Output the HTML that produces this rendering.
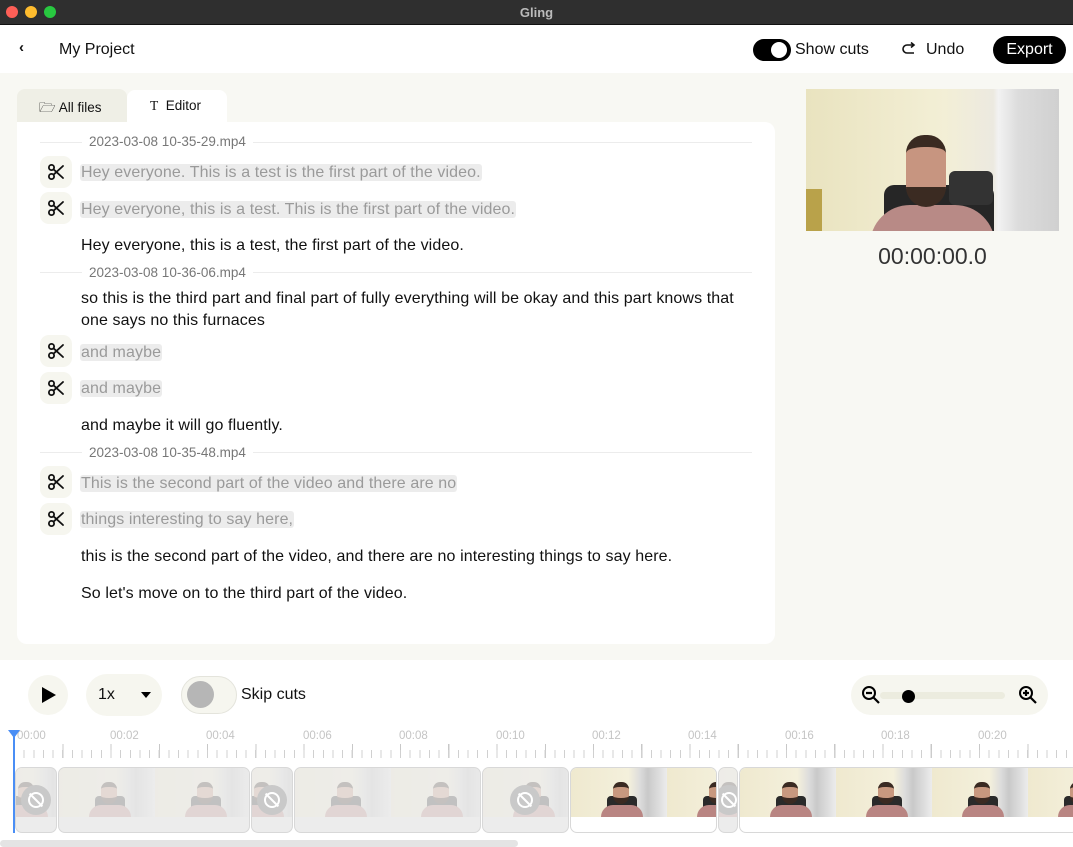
<!DOCTYPE html>
<html><head><meta charset="utf-8"><style>
*{margin:0;padding:0;box-sizing:border-box}
body{width:1073px;height:847px;overflow:hidden;font-family:"Liberation Sans",sans-serif;background:#f8f8f3;position:relative;color:#111}
.a{position:absolute}
.tb{left:0;top:0;width:1073px;height:25px;background:#2f2f2f;border-bottom:1px solid #111}
.dot{top:6px;width:12px;height:12px;border-radius:50%}
.hdr{left:0;top:25px;width:1073px;height:48px;background:#fff}
.panel{left:17px;top:122px;width:758px;height:522px;background:#fff;border-radius:0 10px 10px 10px}
.sep{height:1px;background:#ececec}
.fn{font-size:13.5px;color:#777;background:#fff;padding:0 7px}
.ln{left:81px;font-size:16px;letter-spacing:0.1px;line-height:22px;color:#111}
.cut{color:#9a9a9a;background:#ececec;border-radius:3px;padding:0 1px;margin-left:-1px}
.sc{left:40px;width:32px;height:32px;border-radius:9px;background:#f6f6ef}
.sc svg{position:absolute;left:7px;top:7px}
.bot{left:0;top:660px;width:1073px;height:187px;background:#fff}
.lab{top:730px;font-size:11.5px;color:#c4c4c4}
.clip{top:767px;height:66px;border:1px solid #d8d8d8;border-radius:7px;overflow:hidden;background:#fff}
.clip.f{background:#ececec}
.fr{position:absolute;top:0;width:96px;height:49px;background:linear-gradient(90deg,#efe9cf 0%,#f4f0dc 60%,#dcdcdc 72%,#c9c9c9 80%,#ececec 100%);overflow:hidden}
.fr .chair{position:absolute;left:36px;top:28px;width:30px;height:21px;background:#2a2a2a;border-radius:4px 4px 0 0}
.fr .sh{position:absolute;left:30px;top:37px;width:42px;height:14px;background:#b98582;border-radius:12px 12px 0 0}
.fr .hd{position:absolute;left:42px;top:14px;width:16px;height:22px;background:#c8987f;border-radius:8px 8px 9px 9px;border-top:5px solid #3a2a22;border-bottom:6px solid #3b2a22}
.fade{position:absolute;left:0;top:0;right:0;height:49px;background:rgba(236,236,236,.78)}
.no{position:absolute;width:30px;height:30px;border-radius:50%;background:#c9c9c9;top:17px}
.no:after{content:"";position:absolute;left:7px;top:7px;width:12px;height:12px;border:2px solid #fff;border-radius:50%}
.no:before{content:"";position:absolute;left:14px;top:6px;width:2px;height:18px;background:#fff;transform:rotate(-45deg)}
</style></head><body>
<svg width="0" height="0" style="position:absolute"><defs><g id="sc"><circle cx="4.5" cy="4.5" r="2.6" fill="none" stroke="#111" stroke-width="1.8"/><circle cx="4.5" cy="13.5" r="2.6" fill="none" stroke="#111" stroke-width="1.8"/><path d="M6.5 6.3L16 15M6.5 11.7L16 3" stroke="#111" stroke-width="1.8" stroke-linecap="round"/></g></defs></svg>
<div class="a tb"></div>
<div class="a dot" style="left:6px;background:#fe5f57"></div>
<div class="a dot" style="left:25px;background:#febc2e"></div>
<div class="a dot" style="left:44px;background:#28c840"></div>
<div class="a" style="left:0;width:1073px;top:5px;text-align:center;color:#bbb;font-size:13px;font-weight:bold">Gling</div>

<div class="a hdr"></div>
<div class="a" style="left:19px;top:39px;font-size:15px;font-weight:bold">‹</div>
<div class="a" style="left:59px;top:41px;font-size:16px">My Project</div>
<div class="a" style="left:753px;top:39px;width:38px;height:22px;border-radius:11px;background:#000"></div>
<div class="a" style="left:771px;top:42px;width:16px;height:16px;border-radius:50%;background:#fff"></div>
<div class="a" style="left:795px;top:41px;font-size:16px">Show cuts</div>
<svg class="a" style="left:901px;top:42px" width="16" height="14" viewBox="0 0 16 14"><path d="M12 3H6a4 4 0 0 0 0 8h7M10 0.5l3 2.5-3 2.5" fill="none" stroke="#111" stroke-width="1.6"/></svg>
<div class="a" style="left:926px;top:41px;font-size:16px">Undo</div>
<div class="a" style="left:993px;top:36px;width:73px;height:28px;border-radius:14px;background:#000;color:#fff;font-size:16px;text-align:center;line-height:28px">Export</div>

<div class="a" style="left:17px;top:89px;width:110px;height:34px;background:#efefe6;border-radius:8px 8px 0 0"></div>
<div class="a" style="left:39px;top:98px;font-size:13.5px">🗁 All files</div>
<div class="a" style="left:127px;top:90px;width:100px;height:33px;background:#fff;border-radius:8px 8px 0 0"></div>
<div class="a" style="left:150px;top:98px;font-size:13.5px"><span style="font-family:'Liberation Serif',serif">T</span>&nbsp; Editor</div>
<div class="a panel"></div>

<div class="a sep" style="left:40px;top:142px;width:712px"></div>
<div class="a fn" style="left:82px;top:134px">2023-03-08 10-35-29.mp4</div>
<div class="a sc" style="top:156px"><svg width="18" height="18"><use href="#sc"/></svg></div><div class="a ln" style="top:162px"><span class="cut">Hey everyone. This is a test is the first part of the video.</span></div>
<div class="a sc" style="top:192px"><svg width="18" height="18"><use href="#sc"/></svg></div><div class="a ln" style="top:199px"><span class="cut">Hey everyone, this is a test. This is the first part of the video.</span></div>
<div class="a ln" style="top:235px">Hey everyone, this is a test, the first part of the video.</div>

<div class="a sep" style="left:40px;top:272px;width:712px"></div>
<div class="a fn" style="left:82px;top:265px">2023-03-08 10-36-06.mp4</div>
<div class="a ln" style="top:288px;width:680px">so this is the third part and final part of fully everything will be okay and this part knows that one says no this furnaces</div>
<div class="a sc" style="top:335px"><svg width="18" height="18"><use href="#sc"/></svg></div><div class="a ln" style="top:342px"><span class="cut">and maybe</span></div>
<div class="a sc" style="top:372px"><svg width="18" height="18"><use href="#sc"/></svg></div><div class="a ln" style="top:378px"><span class="cut">and maybe</span></div>
<div class="a ln" style="top:415px">and maybe it will go fluently.</div>

<div class="a sep" style="left:40px;top:452px;width:712px"></div>
<div class="a fn" style="left:82px;top:445px">2023-03-08 10-35-48.mp4</div>
<div class="a sc" style="top:466px"><svg width="18" height="18"><use href="#sc"/></svg></div><div class="a ln" style="top:473px"><span class="cut">This is the second part of the video and there are no</span></div>
<div class="a sc" style="top:503px"><svg width="18" height="18"><use href="#sc"/></svg></div><div class="a ln" style="top:509px"><span class="cut">things interesting to say here,</span></div>
<div class="a ln" style="top:546px">this is the second part of the video, and there are no interesting things to say here.</div>
<div class="a ln" style="top:583px">So let's move on to the third part of the video.</div>

<!-- video -->
<div class="a" style="left:806px;top:89px;width:253px;height:142px;overflow:hidden;background:linear-gradient(90deg,#e9e3bf 0%,#f3efd6 55%,#ece9e0 74%,#f2f2f2 76%,#dcdcdc 84%,#d0d0d0 100%)">
 <div class="a" style="left:0;top:100px;width:16px;height:42px;background:#b9a24a"></div>
 <div class="a" style="left:78px;top:96px;width:110px;height:46px;background:#262626;border-radius:10px 10px 0 0"></div>
 <div class="a" style="left:143px;top:82px;width:44px;height:34px;background:#333;border-radius:6px"></div>
 <div class="a" style="left:64px;top:116px;width:125px;height:40px;background:#b88a86;border-radius:40px 40px 0 0"></div>
 <div class="a" style="left:100px;top:46px;width:40px;height:72px;background:#c79580;border-radius:20px 20px 22px 22px;border-top:12px solid #3a2a21;border-bottom:20px solid #3b2b22"></div>
</div>
<div class="a" style="left:806px;top:243px;width:253px;text-align:center;font-size:23px;color:#333">00:00:00.0</div>

<!-- bottom -->
<div class="a bot"></div>
<div class="a" style="left:28px;top:675px;width:40px;height:40px;border-radius:50%;background:#f6f6ef"></div>
<div class="a" style="left:42px;top:687px;width:0;height:0;border-left:14px solid #000;border-top:8px solid transparent;border-bottom:8px solid transparent"></div>
<div class="a" style="left:86px;top:674px;width:76px;height:42px;border-radius:21px;background:#f6f6ef"></div>
<div class="a" style="left:98px;top:686px;font-size:16px">1x</div>
<div class="a" style="left:141px;top:692px;width:0;height:0;border-top:6px solid #000;border-left:5px solid transparent;border-right:5px solid transparent"></div>
<div class="a" style="left:181px;top:676px;width:56px;height:38px;border-radius:19px;background:#f6f6ef;border:1px solid #e4e4dc"></div>
<div class="a" style="left:187px;top:681px;width:27px;height:27px;border-radius:50%;background:#b6b6b6"></div>
<div class="a" style="left:241px;top:686px;font-size:16px">Skip cuts</div>

<div class="a" style="left:851px;top:675px;width:197px;height:40px;border-radius:20px;background:#f6f6ef"></div>
<div class="a" style="left:880px;top:692px;width:125px;height:7px;border-radius:4px;background:#ececdf"></div>
<div class="a" style="left:902px;top:690px;width:13px;height:13px;border-radius:50%;background:#000"></div>
<svg class="a" style="left:860px;top:684px" width="22" height="22" viewBox="0 0 22 22"><circle cx="9" cy="9" r="6" fill="none" stroke="#000" stroke-width="2"/><path d="M13 13l6 6M6 9h6" stroke="#000" stroke-width="2.2"/></svg>
<svg class="a" style="left:1017px;top:684px" width="22" height="22" viewBox="0 0 22 22"><circle cx="9" cy="9" r="6" fill="none" stroke="#000" stroke-width="2"/><path d="M13 13l6 6M6 9h6M9 6v6" stroke="#000" stroke-width="2.2"/></svg>

<div class="a lab" style="left:17px">00:00</div>
<div class="a lab" style="left:110px">00:02</div>
<div class="a lab" style="left:206px">00:04</div>
<div class="a lab" style="left:303px">00:06</div>
<div class="a lab" style="left:399px">00:08</div>
<div class="a lab" style="left:496px">00:10</div>
<div class="a lab" style="left:592px">00:12</div>
<div class="a lab" style="left:688px">00:14</div>
<div class="a lab" style="left:785px">00:16</div>
<div class="a lab" style="left:881px">00:18</div>
<div class="a lab" style="left:978px">00:20</div>
<div class="a" style="left:14px;top:744px;width:1059px;height:14px;background:repeating-linear-gradient(90deg,#c8c8c8 0 1px,transparent 1px 48.25px)"></div>
<div class="a" style="left:14px;top:750px;width:1059px;height:8px;background:repeating-linear-gradient(90deg,#d0d0d0 0 1px,transparent 1px 9.65px)"></div>

<!-- clips -->
<div class="a clip f" style="left:15px;width:42px"><div class="fr" style="left:-40px"><div class="chair"></div><div class="sh"></div><div class="hd"></div></div><div class="fade"></div><div class="no" style="left:5px"></div></div>
<div class="a clip f" style="left:58px;width:192px"><div class="fr" style="left:0"><div class="chair"></div><div class="sh"></div><div class="hd"></div></div><div class="fr" style="left:96px"><div class="chair"></div><div class="sh"></div><div class="hd"></div></div><div class="fade"></div></div>
<div class="a clip f" style="left:251px;width:42px"><div class="fr" style="left:-40px"><div class="chair"></div><div class="sh"></div><div class="hd"></div></div><div class="fade"></div><div class="no" style="left:5px"></div></div>
<div class="a clip f" style="left:294px;width:187px"><div class="fr" style="left:0"><div class="chair"></div><div class="sh"></div><div class="hd"></div></div><div class="fr" style="left:96px"><div class="chair"></div><div class="sh"></div><div class="hd"></div></div><div class="fade"></div></div>
<div class="a clip f" style="left:482px;width:87px"><div class="fr" style="left:0"><div class="chair"></div><div class="sh"></div><div class="hd"></div></div><div class="fade"></div><div class="no" style="left:27px"></div></div>
<div class="a clip" style="left:570px;width:147px"><div class="fr" style="left:0"><div class="chair"></div><div class="sh"></div><div class="hd"></div></div><div class="fr" style="left:96px"><div class="chair"></div><div class="sh"></div><div class="hd"></div></div></div>
<div class="a clip f" style="left:718px;width:20px"><div class="fr" style="left:-40px"><div class="chair"></div><div class="sh"></div><div class="hd"></div></div><div class="fade"></div><div class="no" style="left:-5px"></div></div>
<div class="a clip" style="left:739px;width:340px"><div class="fr" style="left:0"><div class="chair"></div><div class="sh"></div><div class="hd"></div></div><div class="fr" style="left:96px"><div class="chair"></div><div class="sh"></div><div class="hd"></div></div><div class="fr" style="left:192px"><div class="chair"></div><div class="sh"></div><div class="hd"></div></div><div class="fr" style="left:288px"><div class="chair"></div><div class="sh"></div><div class="hd"></div></div></div>

<div class="a" style="left:13px;top:733px;width:2px;height:100px;background:#4a8ef5"></div>
<div class="a" style="left:8px;top:730px;width:0;height:0;border-top:8px solid #4a8ef5;border-left:6px solid transparent;border-right:6px solid transparent"></div>
<div class="a" style="left:0;top:840px;width:518px;height:7px;border-radius:4px;background:#e4e4e4"></div>
</body></html>
